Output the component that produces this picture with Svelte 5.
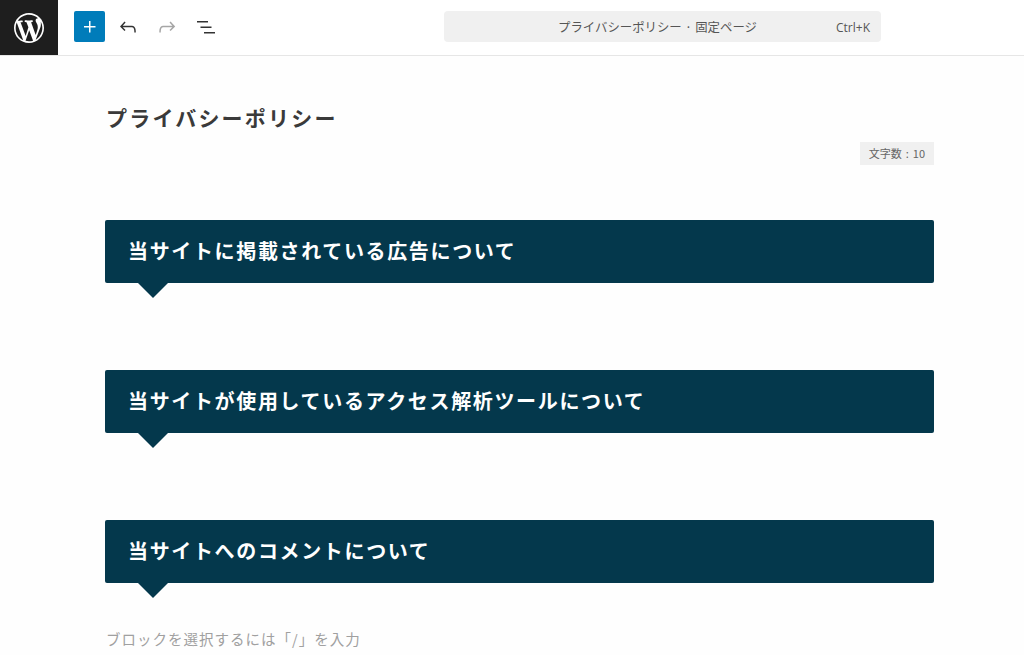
<script>
    const headings = [
        '当サイトに掲載されている広告について',
        '当サイトが使用しているアクセス解析ツールについて',
        '当サイトへのコメントについて'
    ]
</script>

<div class="page">
    <header class="topbar">
        <div class="logo">
            <svg viewBox="0 0 20 20" width="30" height="30">
                <path fill="#fff" d="M20 10c0-5.51-4.49-10-10-10C4.48 0 0 4.49 0 10c0 5.52 4.48 10 10 10 5.51 0 10-4.48 10-10zM7.78 15.37L4.37 6.22c.55-.02 1.17-.08 1.17-.08.5-.06.44-1.13-.06-1.11 0 0-1.45.11-2.37.11-.18 0-.37 0-.58-.01C4.12 2.69 6.87 1.11 10 1.11c2.33 0 4.45.87 6.05 2.34-.68-.11-1.65.39-1.65 1.58 0 .74.45 1.36.9 2.1.35.61.55 1.36.55 2.46 0 1.49-1.4 5-1.4 5l-3.03-8.37c.54-.02.82-.17.82-.17.5-.05.44-1.25-.06-1.22 0 0-1.44.12-2.38.12-.87 0-2.33-.12-2.33-.12-.5-.03-.56 1.2-.06 1.22l.92.08 1.26 3.41zM17.41 10c.24-.64.74-1.87.43-4.25.7 1.29 1.05 2.71 1.05 4.25 0 3.29-1.73 6.24-4.4 7.78.97-2.59 1.94-5.2 2.92-7.78zM6.1 18.09C3.12 16.65 1.11 13.53 1.11 10c0-1.3.23-2.48.72-3.59C3.25 10.3 4.67 14.2 6.1 18.09zm4.03-6.63l2.58 6.98c-.86.29-1.76.45-2.71.45-.79 0-1.57-.11-2.29-.33.81-2.38 1.62-4.74 2.42-7.1z"/>
            </svg>
        </div>
        <div class="tools">
            <button class="add" aria-label="add">
                <svg viewBox="0 0 24 24" width="24" height="24"><path fill="#fff" d="M11 12.5V17.5H12.5V12.5H17.5V11H12.5V6H11V11H6V12.5H11Z"/></svg>
            </button>
            <button class="tool" aria-label="undo">
                <svg viewBox="0 0 24 24" width="24" height="24"><path fill="#333" d="M18.3 11.7c-.6-.6-1.4-.9-2.3-.9H6.7l2.9-3.3-1.1-1-4.5 5L8.5 16l1-1-2.7-2.7H16c.5 0 .9.2 1.3.5 1 1 1 3.4 1 4.5v.3h1.5v-.2c0-1.5 0-4.3-1.5-5.7z"/></svg>
            </button>
            <button class="tool" aria-label="redo">
                <svg viewBox="0 0 24 24" width="24" height="24"><path fill="#a6a6a6" d="M15.6 6.5l-1.1 1 2.9 3.3H8c-.9 0-1.7.3-2.3.9-1.4 1.5-1.4 4.2-1.4 5.6v.2h1.5v-.3c0-1.1 0-3.5 1-4.5.3-.3.7-.5 1.3-.5h9.2L14.5 15l1.1 1.1 4.6-4.6-4.6-5z"/></svg>
            </button>
            <button class="tool" aria-label="list view">
                <svg viewBox="0 0 24 24" width="24" height="24"><path fill="#333" d="M3 6h11v1.5H3V6Zm3.5 5.5h11V13h-11v-1.5ZM21 17H10v1.5h11V17Z"/></svg>
            </button>
        </div>
        <div class="command">
            <span class="docTitle">プライバシーポリシー · 固定ページ</span>
            <span class="shortcut">Ctrl+K</span>
        </div>
    </header>

    <main class="editor">
        <h1 class="title">プライバシーポリシー</h1>
        <div class="countRow"><span class="count">文字数 : 10</span></div>
        {#each headings as text}
            <h2 class="heading">{text}</h2>
        {/each}
        <p class="placeholder">ブロックを選択するには「/」を入力</p>
    </main>
</div>

<style>
    :global(body){
        background: #fefefe;
        overflow: hidden;
    }
    .page{
        height: 655px;
        overflow: hidden;
        font-family: "Noto Sans CJK JP", "Noto Sans", sans-serif;
        color: #333;
    }
    .topbar{
        display: flex;
        align-items: flex-start;
        height: 55px;
        background: #fff;
        border-bottom: 1px solid #e6e6e6;
    }
    .logo{
        display: flex;
        align-items: center;
        justify-content: center;
        width: 58px;
        height: 55px;
        background: #1e1e1e;
    }
    .tools{
        display: flex;
        align-items: center;
        gap: 7px;
        margin: 11px 0 0 16px;
    }
    button{
        display: flex;
        align-items: center;
        justify-content: center;
        padding: 0;
        border: none;
        background: none;
    }
    .add{
        width: 31px;
        height: 31px;
        background: #007cba;
        border-radius: 2px;
    }
    .tool{
        width: 32px;
        height: 31px;
    }
    .command{
        position: relative;
        box-sizing: border-box;
        display: flex;
        align-items: center;
        justify-content: center;
        width: 437px;
        height: 31px;
        margin: 11px 0 0 222px;
        background: #f0f0f0;
        border-radius: 4px;
        color: #555;
    }
    .docTitle{
        margin-right: 10px;
        font-size: 12.4px;
        word-spacing: .5px;
    }
    .shortcut{
        position: absolute;
        right: 11px;
        top: 8px;
        font-family: "Open Sans", "Noto Sans", sans-serif;
        font-size: 12px;
        line-height: 18px;
    }
    .editor{
        padding: 0 90px 0 105px;
    }
    .title{
        margin: 0;
        padding: 43px 0 0 1px;
        font-size: 21px;
        line-height: 36px;
        font-weight: 700;
        letter-spacing: 2.2px;
        color: #3a3a3a;
    }
    .countRow{
        display: flex;
        justify-content: flex-end;
        margin-top: 7px;
    }
    .count{
        padding: 0 9px;
        height: 23px;
        line-height: 23px;
        font-size: 11px;
        word-spacing: 1.5px;
        background: #f0f0f0;
        color: #666;
    }
    .heading{
        position: relative;
        box-sizing: border-box;
        height: 63px;
        margin: 55px 0 87px;
        padding-left: 23px;
        background: #04384c;
        border-radius: 2px;
        color: #fff;
        font-size: 20px;
        line-height: 61px;
        font-weight: 700;
        letter-spacing: 1.65px;
    }
    .heading + .heading{
        margin-top: 0;
    }
    .heading::after{
        content: "";
        position: absolute;
        left: 33px;
        top: 100%;
        border-style: solid;
        border-width: 15px 15.5px 0;
        border-color: #04384c transparent transparent;
    }
    .placeholder{
        margin: -43px 0 0 1px;
        font-size: 14.5px;
        line-height: 24px;
        letter-spacing: 1px;
        color: #a0a0a0;
    }
</style>
